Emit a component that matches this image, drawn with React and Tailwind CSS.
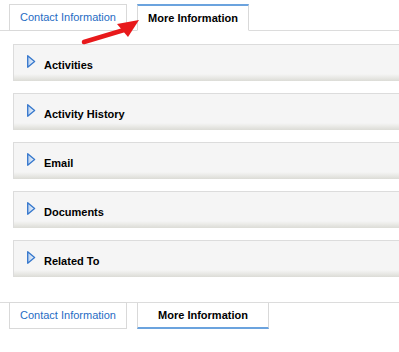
import React from "react";

const sections = ["Activities", "Activity History", "Email", "Documents", "Related To"];

const Arrow = () => (
  <svg width="10" height="13" viewBox="0 0 10 13" className="shrink-0 mt-[10px]">
    <defs>
      <linearGradient id="tri" x1="0" y1="0" x2="1" y2="0">
        <stop offset="0" stopColor="#b7d0ef" />
        <stop offset="1" stopColor="#eef4fc" />
      </linearGradient>
    </defs>
    <polygon points="0.7,0.7 7.6,6.5 0.7,12.2" fill="url(#tri)" stroke="#3577cc" strokeWidth="1.3" strokeLinejoin="round" />
  </svg>
);

const Section = ({ title }) => (
  <div className="h-[37px] flex items-start pl-[13px] border-l border-t border-[#dcdcdc] bg-[linear-gradient(to_bottom,#f5f5f5_0px,#f5f5f5_29px,#ebebe8_32px,#d8d8d2_37px)]">
    <Arrow />
    <span className="ml-[7px] mt-[14px] text-[11px] leading-[13px] font-bold text-black">{title}</span>
  </div>
);

export default function App() {
  return (
    <div className="relative w-full bg-white pb-[23px]" style={{ fontFamily: '"Liberation Sans", Arial, sans-serif' }}>
      {/* top tabs */}
      <div className="flex items-end pl-[9px] pt-[4px] border-b border-[#dcdcdc] gap-[10px]">
        <div className="w-[118px] h-[27px] -mb-px border border-[#d9d9d9] flex items-center justify-center text-[11px] text-[#1f6cc4]">
          Contact Information
        </div>
        <div className="w-[112px] h-[27px] -mb-px border-x border-[#d9d9d9] border-t-2 border-t-[#6ba3de] border-b border-b-white bg-white flex items-center justify-center text-[11px] font-bold text-black">
          More Information
        </div>
      </div>

      {/* sections */}
      <div className="flex flex-col gap-[12px] pl-[13px] pt-[13px]">
        {sections.map((s) => (
          <Section key={s} title={s} />
        ))}
      </div>

      {/* bottom tabs */}
      <div className="mt-[25px] flex items-start pl-[9px] border-t border-[#dcdcdc] gap-[10px]">
        <div className="w-[118px] h-[27px] -mt-px border border-[#d9d9d9] flex items-center justify-center text-[11px] text-[#1f6cc4]">
          Contact Information
        </div>
        <div className="w-[132px] h-[26px] border-x border-[#d9d9d9] border-b-2 border-b-[#6ba3de] bg-white flex items-center justify-center text-[11px] font-bold text-black">
          More Information
        </div>
      </div>

      {/* annotation arrow */}
      <svg className="absolute left-0 top-0 pointer-events-none" width="160" height="60" viewBox="0 0 160 60">
        <line x1="84" y1="42" x2="124" y2="30" stroke="#e8191b" strokeWidth="4.5" strokeLinecap="round" />
        <polygon points="139,20 117,24 128,37" fill="#e8191b" />
      </svg>
    </div>
  );
}
